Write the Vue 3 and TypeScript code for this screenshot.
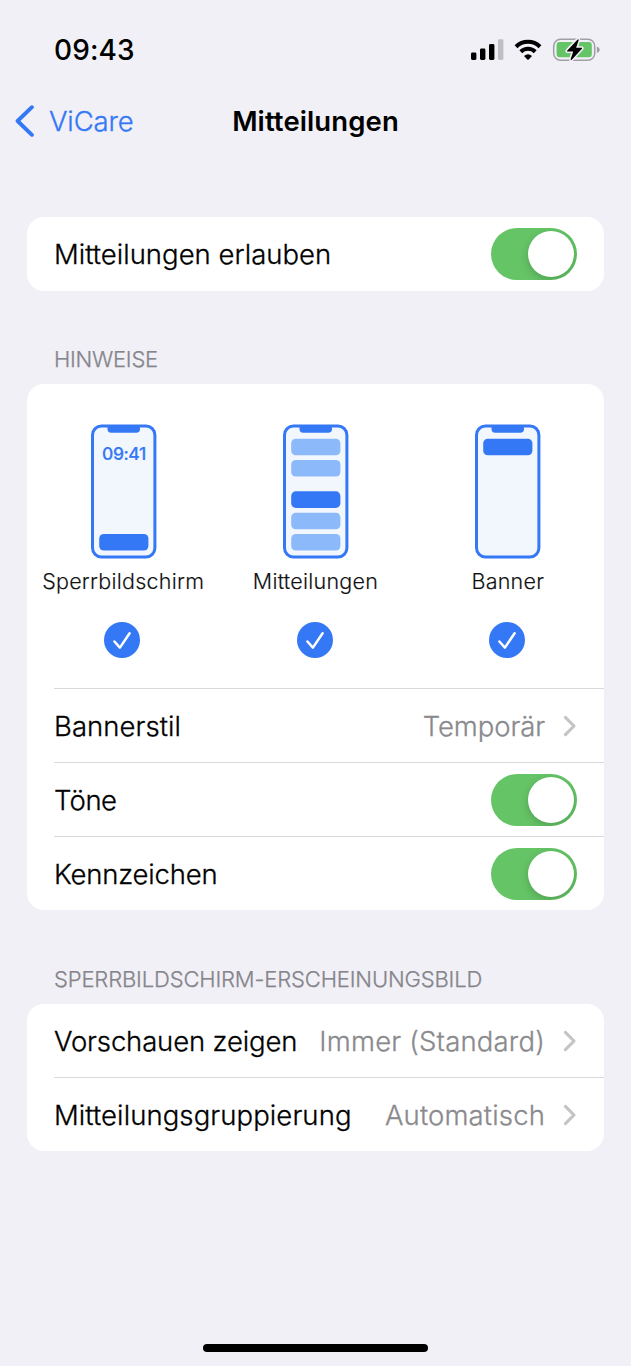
<script setup lang="ts">
import { ref } from 'vue'

interface Bar { y: number; strong: boolean }
interface AlertStyle { key: string; label: string; clock?: string; bars: Bar[] }
interface LinkRow { key: string; label: string; value: string }
interface SwitchRow { key: string; label: string; on: boolean }

const allow = ref(true)

const alerts: AlertStyle[] = [
  { key: 'lock', label: 'Sperrbildschirm', clock: '09:41', bars: [{ y: 110, strong: true }] },
  {
    key: 'center',
    label: 'Mitteilungen',
    bars: [
      { y: 14.7, strong: false },
      { y: 36, strong: false },
      { y: 67.3, strong: true },
      { y: 88.7, strong: false },
      { y: 110, strong: false },
    ],
  },
  { key: 'banner', label: 'Banner', bars: [{ y: 14.7, strong: true }] },
]

const switches = ref<SwitchRow[]>([
  { key: 'sounds', label: 'Töne', on: true },
  { key: 'badges', label: 'Kennzeichen', on: true },
])

const lockRows: LinkRow[] = [
  { key: 'preview', label: 'Vorschauen zeigen', value: 'Immer (Standard)' },
  { key: 'grouping', label: 'Mitteilungsgruppierung', value: 'Automatisch' },
]
</script>

<template>
  <div class="screen">
    <header class="status">
      <span class="time">09:43</span>
      <svg class="indicators" width="132" height="26" viewBox="0 0 132 26">
        <rect x="2" y="15.5" width="5.4" height="7.5" rx="1.4" />
        <rect x="11" y="11.5" width="5.4" height="11.5" rx="1.4" />
        <rect x="20" y="7" width="5.4" height="16" rx="1.4" />
        <rect x="29" y="2.2" width="5.4" height="20.8" rx="1.4" fill="#bfbfc4" />
        <g fill="none" stroke="#000" stroke-width="4">
          <path d="M47 9.7A17.2 17.2 0 0 1 71 9.7" />
          <path d="M51.8 14.7A10.3 10.3 0 0 1 66.2 14.7" />
        </g>
        <path d="M55 18.9Q59 15.6 63 18.9L59.7 22.4Q59 23.1 58.3 22.4Z" />
        <rect x="84.7" y="2.2" width="41" height="21" rx="6.8" fill="none" stroke="#a0a0a4" stroke-width="1.5" />
        <path d="M127.8 9.5Q130.8 10.5 130.8 12.8Q130.8 15.1 127.8 16.1Z" fill="#a0a0a4" />
        <rect x="87.6" y="5.1" width="35.2" height="15.2" rx="3" fill="#65c466" />
        <path
          d="M108.4 2.7L98.1 13.7Q97.5 14.5 98.5 14.5H104.2L101.7 22.1Q101.4 23.8 102.8 22.7L112.9 11.7Q113.5 10.8 112.5 10.8H107.1L109.6 3.4Q109.8 1.5 108.4 2.7Z"
          stroke="#f1f0f6" stroke-width="3.2" paint-order="stroke" stroke-linejoin="round"
        />
      </svg>
    </header>

    <nav class="nav">
      <a class="back">
        <svg width="20" height="34" viewBox="0 0 20 34">
          <path d="M17.9 3.2L3.6 17L17.9 30.8" fill="none" stroke="#3478f6" stroke-width="3.9" stroke-linecap="round" stroke-linejoin="round" />
        </svg>
        <span>ViCare</span>
      </a>
      <h1 class="title">Mitteilungen</h1>
    </nav>

    <section class="card">
      <div class="row allow">
        <span class="name">Mitteilungen erlauben</span>
        <button class="switch" :class="{ on: allow }" aria-label="Mitteilungen erlauben" @click="allow = !allow"><i /></button>
      </div>
    </section>

    <h2 class="caption">HINWEISE</h2>
    <section class="card">
      <div class="alerts">
        <div v-for="a in alerts" :key="a.key" class="alert">
          <svg class="phone" width="66" height="136" viewBox="0 0 66 136">
            <rect x="1.5" y="2" width="62.4" height="131" rx="9" fill="#f2f7fe" stroke="#3478f6" stroke-width="3" />
            <path d="M16.5 2H49V5Q49 8.8 45.2 8.8H20.3Q16.5 8.8 16.5 5Z" fill="#3478f6" />
            <text v-if="a.clock" class="clock" x="32.9" y="35.6" text-anchor="middle">{{ a.clock }}</text>
            <rect
              v-for="b in a.bars" :key="b.y" x="8.2" :y="b.y" width="49.2" height="16.6" rx="4.6"
              :fill="b.strong ? '#3478f6' : '#8bb9f9'"
            />
          </svg>
          <span class="kind">{{ a.label }}</span>
          <svg class="check" width="36" height="36" viewBox="0 0 36 36">
            <circle cx="18" cy="18" r="18" fill="#3478f6" />
            <path d="M10.4 19.5L15.9 25.6L25.6 11.3" fill="none" stroke="#fff" stroke-width="2.5" stroke-linecap="round" stroke-linejoin="round" />
          </svg>
        </div>
      </div>
      <div class="row lined style">
        <span class="name">Bannerstil</span>
        <span class="value">Temporär</span>
        <svg class="chevron" width="14" height="22" viewBox="0 0 14 22">
          <path d="M2.4 2.4L11 11L2.4 19.6" fill="none" stroke="#c4c4c6" stroke-width="3.1" stroke-linecap="round" stroke-linejoin="round" />
        </svg>
      </div>
      <div v-for="s in switches" :key="s.key" class="row lined" :class="s.key">
        <span class="name">{{ s.label }}</span>
        <button class="switch" :class="{ on: s.on }" :aria-label="s.label" @click="s.on = !s.on"><i /></button>
      </div>
    </section>

    <h2 class="caption wide">SPERRBILDSCHIRM-ERSCHEINUNGSBILD</h2>
    <section class="card">
      <div v-for="(r, i) in lockRows" :key="r.key" class="row" :class="[r.key, { lined: i > 0 }]">
        <span class="name">{{ r.label }}</span>
        <span class="value">{{ r.value }}</span>
        <svg class="chevron" width="14" height="22" viewBox="0 0 14 22">
          <path d="M2.4 2.4L11 11L2.4 19.6" fill="none" stroke="#c4c4c6" stroke-width="3.1" stroke-linecap="round" stroke-linejoin="round" />
        </svg>
      </div>
    </section>

    <div class="home" />
  </div>
</template>

<style>
body { background: #f1f0f6; }
</style>

<style scoped>
.screen {
  box-sizing: border-box;
  width: 631px;
  height: 1366px;
  padding: 0 27px 14px;
  display: flex;
  flex-direction: column;
  overflow: hidden;
  background: #f1f0f6;
  color: #000;
  font-family: Inter, "Liberation Sans", sans-serif;
  font-size: 27.5px;
  font-weight: 300;
  white-space: nowrap;
}
.status {
  display: flex;
  align-items: center;
  justify-content: space-between;
  height: 46px;
  padding: 27px 3px 0 27px;
}
.time { font-size: 28px; font-weight: 500; letter-spacing: 0.1px; }
.nav {
  display: grid;
  grid-template-columns: 1fr auto 1fr;
  align-items: center;
  height: 96px;
}
.back {
  display: flex;
  align-items: center;
  gap: 15px;
  margin-left: -13px;
  color: #3478f6;
  letter-spacing: -0.15px;
}
.name, .value, .back span { -webkit-text-stroke: 0.3px currentColor; }
.title { margin: 0; font-size: 27.5px; font-weight: 600; letter-spacing: 0.1px; }
.card {
  flex: none;
  border-radius: 17px;
  background: #fff;
  overflow: hidden;
}
.nav + .card { margin-top: 48px; }
.row {
  position: relative;
  box-sizing: border-box;
  display: flex;
  align-items: center;
  height: 74px;
  padding: 0 27px;
}
.row.preview { height: 73px; padding-top: 1px; }
.row.lined { padding-top: 2px; }
.lined::before {
  content: "";
  position: absolute;
  top: 0;
  left: 27px;
  right: 0;
  height: 1px;
  background: #d9d9db;
}
.name { margin-right: auto; }
.value { color: #8a8a8e; }
.allow .name { letter-spacing: 0.02px; }
.style .name { letter-spacing: 0.05px; }
.style .value { letter-spacing: -0.1px; }
.sounds .name { letter-spacing: -0.5px; }
.badges .name { letter-spacing: -0.2px; }
.preview .name { letter-spacing: -0.15px; }
.preview .value { letter-spacing: 0.19px; }
.grouping .name { letter-spacing: 0.09px; }
.grouping .value { letter-spacing: 0.15px; }
.chevron { margin-left: 18px; }
.switch {
  width: 86px;
  height: 52px;
  padding: 3px;
  border: 0;
  border-radius: 26px;
  background: #e9e9eb;
  display: flex;
  overflow: hidden;
}
.switch i {
  width: 46px;
  height: 46px;
  border-radius: 50%;
  background: #fff;
  box-shadow: 0 3px 9px rgba(0, 0, 0, 0.18);
}
.switch.on { background: #65c466; justify-content: flex-end; }
.caption {
  flex: none;
  margin: 0;
  height: 93px;
  padding: 43px 27px 0;
  box-sizing: border-box;
  font-size: 22px;
  line-height: 50px;
  font-weight: 300;
  letter-spacing: -0.25px;
  color: #85858b;
  -webkit-text-stroke: 0.25px currentColor;
}
.caption.wide { height: 94px; padding-top: 44px; letter-spacing: -0.15px; }
.alerts {
  display: grid;
  grid-template-columns: repeat(3, 1fr);
  height: 304px;
}
.alert {
  display: flex;
  flex-direction: column;
  align-items: center;
  padding-top: 40px;
}
.phone { margin-left: 0.7px; }
.clock { font-size: 17.5px; font-weight: 500; letter-spacing: -0.45px; fill: #3478f6; stroke: #3478f6; stroke-width: 0.2px; }
.kind {
  height: 30px;
  margin-top: 6px;
  font-size: 21.5px;
  line-height: 30px;
  letter-spacing: 0.25px;
  color: #111;
  -webkit-text-stroke: 0.15px currentColor;
}
.check { margin: 26px 1.6px 0 0; }
.home {
  width: 225px;
  height: 8px;
  margin: auto auto 0;
  border-radius: 4px;
  background: #000;
}
</style>
